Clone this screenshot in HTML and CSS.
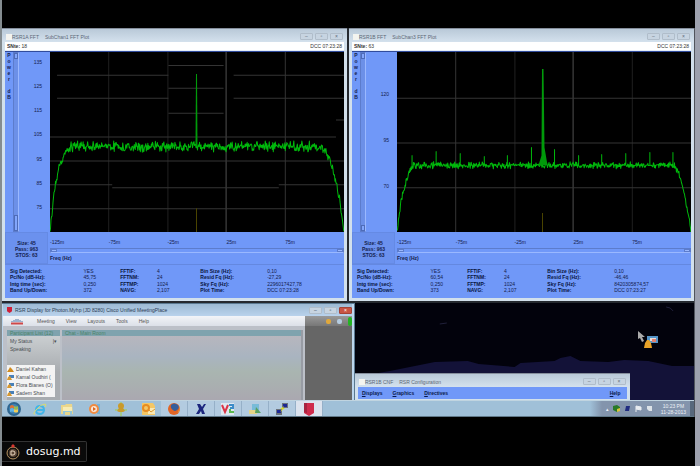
FILE: index.html
```
<!DOCTYPE html>
<html lang="en">
<head>
<meta charset="UTF-8">
<meta name="viewport" content="width=device-width, initial-scale=1.0">
<title>RSR Display</title>
<link rel="stylesheet" href="styles.css">
</head>
<body>

<main class="desktop">
    <section class="plots">
        <article class="window plot-window">
            <header class="titlebar">
                <span class="doc-icon"></span>
                <span class="title">RSR1A FFT</span>
                <span class="title">SubChan1 FFT Plot</span>
                <span class="controls"><button aria-label="Minimize">–</button><button aria-label="Maximize">▫</button><button aria-label="Close">×</button></span>
            </header>
            <div class="site"><span><b>SNte:</b> 18</span><span>DCC 07:23:28</span></div>
            <div class="plot">
                <div class="power">P<br>o<br>w<br>e<br>r<br><br>d<br>B</div>
                <div class="vslider"><i></i><i class="long"></i></div>
                <div class="ticks"><span>135</span><span>125</span><span>115</span><span>105</span><span>95</span><span>85</span><span>75</span></div>
                <svg class="canvas" id="plot-a" viewBox="0 0 293 181" preserveAspectRatio="none">
                    <path class="grid faint" d="M58.5 0V181M117.5 0V181"/>
                    <path class="grid bright" d="M175.5 0V181"/>
                    <path class="grid" d="M234.5 0V181M7 23.5H118M7 46.5H118M118 13.5H173M118 36.5H173M118 61.5H173M183 23.5H293M183 46.5H293M0 85.5H285M285 68.5H293M0 109.5H293M0 133.5H62M62 136.5H228M228 133.5H293M0 157.5H293"/>
                    <path class="marker" d="M146 157V181"/>
                </svg>
            </div>
            <div class="axis">
                <div class="passes">Size: 45<br>Pass: 963<br>STOS: 63</div>
                <div class="freq">
                    <div class="freq-labels"><span>-125m</span><span>-75m</span><span>-25m</span><span>25m</span><span>75m</span></div>
                    <div class="hslider"><i></i><i></i></div>
                    <b>Freq (Hz)</b>
                </div>
            </div>
            <table class="stats">
                <tr><th>Sig Detected:</th><td>YES</td><th>FFTIF:</th><td>4</td><th>Bin Size (Hz):</th><td>0,10</td></tr>
                <tr><th>Pc/No (dB-Hz):</th><td>45,75</td><th>FFTNM:</th><td>24</td><th>Resid Fq (Hz):</th><td>-27,29</td></tr>
                <tr><th>Intg time (sec):</th><td>0,250</td><th>FFTMP:</th><td>1024</td><th>Sky Fq (Hz):</th><td>2296017427,78</td></tr>
                <tr><th>Band Up/Down:</th><td>372</td><th>NAVG:</th><td>2,107</td><th>Plot Time:</th><td>DCC 07:23:28</td></tr>
            </table>
        </article>

        <article class="window plot-window">
            <header class="titlebar">
                <span class="doc-icon"></span>
                <span class="title">RSR1B FFT</span>
                <span class="title">SubChan3 FFT Plot</span>
                <span class="controls"><button aria-label="Minimize">–</button><button aria-label="Maximize">▫</button><button aria-label="Close">×</button></span>
            </header>
            <div class="site"><span><b>SNte:</b> 63</span><span>DCC 07:23:28</span></div>
            <div class="plot">
                <div class="power">P<br>o<br>w<br>e<br>r<br><br>d<br>B</div>
                <div class="vslider"><i></i><i></i></div>
                <div class="ticks wide"><span>120</span><span>95</span><span>70</span></div>
                <svg class="canvas" id="plot-b" viewBox="0 0 293 181" preserveAspectRatio="none">
                    <path class="grid faint" d="M117.5 0V181M234.5 0V181"/>
                    <path class="grid bright" d="M175.5 0V181"/>
                    <path class="grid" d="M58.5 0V181M0 46.5H293M0 91.5H293M0 136.5H293"/>
                    <path class="marker" d="M145 162V181"/>
                </svg>
            </div>
            <div class="axis">
                <div class="passes">Size: 45<br>Pass: 963<br>STOS: 63</div>
                <div class="freq">
                    <div class="freq-labels"><span>-125m</span><span>-75m</span><span>-25m</span><span>25m</span><span>75m</span></div>
                    <div class="hslider"><i></i><i></i></div>
                    <b>Freq (Hz)</b>
                </div>
            </div>
            <table class="stats">
                <tr><th>Sig Detected:</th><td>YES</td><th>FFTIF:</th><td>4</td><th>Bin Size (Hz):</th><td>0,10</td></tr>
                <tr><th>Pc/No (dB-Hz):</th><td>60,54</td><th>FFTNM:</th><td>24</td><th>Resid Fq (Hz):</th><td>-46,46</td></tr>
                <tr><th>Intg time (sec):</th><td>0,250</td><th>FFTMP:</th><td>1024</td><th>Sky Fq (Hz):</th><td>8420305874,57</td></tr>
                <tr><th>Band Up/Down:</th><td>373</td><th>NAVG:</th><td>2,107</td><th>Plot Time:</th><td>DCC 07:23:27</td></tr>
            </table>
        </article>
    </section>

    <section class="lower">
        <article class="meeting">
            <header class="meeting-title">
                <svg class="shield" viewBox="0 0 6 7"><path d="M0 0H6V5L3 7L0 5Z" fill="#cf2038"/></svg>
                <span>RSR Display for Photon.Myhp (JD 8280) Cisco Unified MeetingPlace</span>
                <span class="controls"><button aria-label="Minimize">–</button><button aria-label="Maximize">▫</button><button class="close" aria-label="Close">×</button></span>
            </header>
            <nav class="meeting-menu">
                <svg class="cisco" viewBox="0 0 12 7"><path d="M1 3V4M3 2V4M5 1V4M7 1V4M9 2V4M11 3V4" stroke="#5478a8"/><path d="M0 5.5H12" stroke="#d04848" stroke-width="2"/></svg>
                <a href="#">Meeting</a><a href="#">View</a><a href="#">Layouts</a><a href="#">Tools</a><a href="#">Help</a>
                <span class="status"><i class="amber"></i><i class="cloud"></i><i class="green"></i></span>
            </nav>
            <div class="meeting-body">
                <aside class="attendees">
                    <header>Participant List (12)</header>
                    <p>My Status <span>|▾</span></p>
                    <p>Speaking</p>
                    <ul>
                        <li><svg viewBox="0 0 7 5"><path d="M0 5L2 2L3 0L5 2L7 5Z" fill="#d08a1c"/></svg>Daniel Kahan</li>
                        <li><svg viewBox="0 0 7 5"><path d="M2 0H7V3H2Z" fill="#4880b8"/><path d="M0 5L1 2L3 1L5 5Z" fill="#d89830"/></svg>Kamal Oudhiri (</li>
                        <li><svg viewBox="0 0 7 5"><path d="M2 0H7V3H2Z" fill="#4880b8"/><path d="M0 5L1 2L3 1L5 5Z" fill="#d89830"/></svg>Flora Bianes (O)</li>
                        <li><svg viewBox="0 0 7 5"><path d="M2 0H7V3H2Z" fill="#4880b8"/><path d="M0 5L1 2L3 1L5 5Z" fill="#d89830"/></svg>Sadem Shan</li>
                    </ul>
                </aside>
                <div class="shared"><header>Chat - Main Room</header></div>
                <div class="void"></div>
            </div>
        </article>

        <div class="wallpaper">
            <svg class="hills" viewBox="0 0 340 97" preserveAspectRatio="none">
                <path d="M0 74L35 68L80 59L113 58L124 61L160 64L166 60L200 58L206 55L216 53L226 58L254 59L270 57L294 58L318 63L340 63V97H0Z" fill="#131238"/>
                <path d="M312 4L316 5L319 8M85 21L92 20" stroke="#20203a" fill="none"/>
            </svg>
            <svg class="pointer" viewBox="0 0 20 18">
                <path d="M0 0V8L2 7L4 11L6 10L4 6H7Z" fill="#aaa"/>
                <path d="M9 5H20V12H9Z" fill="#5594c8"/>
                <path d="M12 7H18V10H12Z" fill="#e8dcd8"/>
                <path d="M14 8H18V11H14Z" fill="#e08070"/>
                <path d="M6 17L7 12L9 9H11L13 12L14 17Z" fill="#e8a228"/>
            </svg>
            <article class="window config">
                <header class="titlebar">
                    <span class="doc-icon"></span>
                    <span class="title">RSR1B CNF</span>
                    <span class="title">RSR Configuration</span>
                    <span class="controls"><button aria-label="Minimize">–</button><button aria-label="Maximize">▫</button><button aria-label="Close">×</button></span>
                </header>
                <nav class="config-menu"><a href="#"><u>D</u>isplays</a><a href="#"><u>G</u>raphics</a><a href="#"><u>D</u>irectives</a><a href="#" class="help"><u>H</u>elp</a></nav>
            </article>
        </div>
    </section>

    <footer class="taskbar">
        <button aria-label="Start"><svg viewBox="0 0 16 14"><circle cx="8" cy="7" r="7" fill="#2f6690"/><circle cx="8" cy="7" r="5" fill="#3f83b4"/><path d="M4 4Q6 2 8 4V7Q6 5 4 7Z" fill="#d8743c"/><path d="M8 4Q10 5 12 4V7Q10 8 8 7Z" fill="#98bc54"/><path d="M4 7Q6 5 8 7V10Q6 9 4 10Z" fill="#62b4e4"/><path d="M8 7Q10 8 12 7V10Q10 11 8 10Z" fill="#f0cc58"/></svg></button>
        <button aria-label="Internet Explorer"><svg viewBox="0 0 16 14"><path d="M12 9Q11 12 8 12Q4 12 4 8Q4 4 8 4Q12 4 12 8H5" fill="none" stroke="#42b4e8" stroke-width="2"/><path d="M3 12Q0 13 4 8Q9 2 13 2Q15 2 13 5" fill="none" stroke="#d8dc70"/></svg></button>
        <button aria-label="Explorer"><svg viewBox="0 0 16 14"><path d="M2 3H6L7 2H13L14 12H2Z" fill="#ead68c"/><path d="M4 5H13V9H4Z" fill="#f8ecb4"/><path d="M4 9H13V12H4Z" fill="#94c6d8"/><path d="M6 10H11V13H6Z" fill="#e6d68c"/></svg></button>
        <button aria-label="Media Player"><svg viewBox="0 0 16 14"><path d="M11 2H14V12H11Z" fill="#76b4da"/><circle cx="8" cy="7" r="5" fill="#ef8b42"/><circle cx="8" cy="7" r="3" fill="#fbe6d6"/><path d="M7 5L10 7L7 9Z" fill="#d86424"/></svg></button>
        <button aria-label="Locator"><svg viewBox="0 0 16 14"><path d="M8 0V14M2 8H14" stroke="#a4cf42"/><circle cx="8" cy="4" r="3" fill="#c99a2b"/><path d="M4 9L6 6H10L12 9L10 10H6Z" fill="#c99a2b"/></svg></button>
        <button aria-label="Outlook"><svg viewBox="0 0 16 14"><path d="M2 1H13L15 4V13H2Z" fill="#f4c766"/><path d="M8 6H15V12H8Z" fill="#fae8b4"/><path d="M8 7L11 10L15 7" fill="none" stroke="#d89830"/><circle cx="6" cy="6" r="3" fill="none" stroke="#e78c22" stroke-width="2"/></svg></button>
        <button class="open" aria-label="Firefox"><svg viewBox="0 0 16 14"><circle cx="8" cy="7" r="6" fill="#e26526"/><path d="M5 3Q8 0 12 3Q14 6 11 8Q9 10 7 8Q4 6 5 3Z" fill="#365e9c"/><path d="M11 11Q14 8 13 4Q15 9 11 11Z" fill="#f0b84c"/></svg></button>
        <button class="open" aria-label="X server"><svg viewBox="0 0 16 14"><path d="M4 2H7L9 5L11 2H13L10 7L12 12H9L8 9L6 12H3L6 7Z" fill="#1c267d"/></svg></button>
        <button class="open" aria-label="VNC"><svg viewBox="0 0 16 14"><path d="M1 1H14V13H1Z" fill="#dfe7f0"/><path d="M2 3L5 10L8 3" fill="none" stroke="#db3446" stroke-width="2"/><path d="M9 3H13V6H10" fill="none" stroke="#3b8cc8" stroke-width="2"/><path d="M10 7V10H14" fill="none" stroke="#5bb950" stroke-width="2"/></svg></button>
        <button class="open" aria-label="Messenger"><svg viewBox="0 0 16 14"><path d="M5 2H12V9H5Z" fill="#78bbd8"/><path d="M2 8H10V12H2Z" fill="#e4d387"/><path d="M9 5L14 11H8Z" fill="#58a060"/></svg></button>
        <button class="open" aria-label="PuTTY"><svg viewBox="0 0 16 14"><path d="M8 1H14V6H8Z" fill="#6c737c"/><path d="M9 2H13V5H9Z" fill="#1c2794"/><path d="M2 7H8V13H2Z" fill="#6c737c"/><path d="M3 8H7V11H3Z" fill="#1c2794"/><path d="M10 4L6 7H8L6 10L11 6H9Z" fill="#d8d82c"/></svg></button>
        <button class="open active" aria-label="MeetingPlace"><svg viewBox="0 0 16 14"><path d="M3 1H13V11L8 14L3 11Z" fill="#cf2c4c"/><path d="M3 1H6V11L3 10Z" fill="#a72440"/></svg></button>
        <div class="tray">
            <span>▴</span>
            <svg viewBox="0 0 7 7"><path d="M0 1L4 0L7 2V5L4 7L0 5Z" fill="#287a28"/><path d="M4 4L7 3V6L4 7Z" fill="#d8c43c"/></svg>
            <svg viewBox="0 0 7 7"><path d="M2 1H6L5 6H1Z" fill="#202c80"/></svg>
            <svg viewBox="0 0 7 7"><path d="M1 1V7M1 1L6 2V5L1 4" fill="#e8ecf0" stroke="#e8ecf0"/></svg>
            <svg viewBox="0 0 7 7"><path d="M1 1H6V6H3L1 4Z" fill="#dde3e8"/></svg>
            <time>10:23 PM<br>11-28-2013</time>
            <i class="peek"></i>
        </div>
    </footer>
</main>

<a class="badge" href="#">
    <svg viewBox="0 0 14 16"><circle cx="7" cy="9" r="6" fill="#15120f" stroke="#b99562" stroke-width="1"/><circle cx="7" cy="9" r="4" fill="#5b4636"/><path d="M5 7H7Q9 7 9 9Q9 11 7 11H5Z" fill="none" stroke="#ead8c0" stroke-width="1"/><path d="M5 2L7 0L9 2L7 4Z" fill="#d8362e"/></svg>
    dosug.md
</a>

<script src="plots.js"></script>
</body>
</html>
```
FILE: styles.css
```
* {
    box-sizing: border-box;
}
body {
    margin: 0;
    min-height: 100vh;
    padding-top: 28px;
    background: #000;
    border-left: 2px solid #848c90;
    border-right: 5px solid #9da1ae;
    font: 5px/6px "Liberation Sans", Arial, sans-serif;
    color: #14204c;
}
a {
    color: inherit;
    text-decoration: none;
}
button {
    font: inherit;
    color: inherit;
    padding: 0;
    border: 0;
    background: none;
}
.desktop {
    border-right: 1px solid #50545c;
}

/* windows */
.plots {
    display: grid;
    grid-template-columns: 1fr 1fr;
    gap: 2px;
    background: #25292f;
    padding-bottom: 2px;
}
.window {
    background: #d2e0ec;
    border-top: 1px solid #858e9c;
    padding: 0 3px 3px;
}
.titlebar {
    display: flex;
    align-items: center;
    gap: 6px;
    height: 13px;
    margin: 0 -3px;
    padding: 2px 4px 0;
    background: linear-gradient(#b9c9d8, #d4e1ed);
    color: #5c6876;
}
.doc-icon {
    width: 6px;
    height: 6px;
    margin-right: -6px;
    background: #f4f4f0;
}
.controls {
    display: flex;
    gap: 2px;
    margin-left: auto;
}
.controls button {
    width: 13px;
    height: 7px;
    border: 1px solid #b0bdca;
    border-radius: 1px;
    background: #c7d4e1;
    line-height: 5px;
}
.site {
    display: flex;
    justify-content: space-between;
    height: 9px;
    padding: 1px 2px;
    background: #fff;
    color: #333;
    border-bottom: 1px solid #e4ecf8;
}

/* spectrum plots */
.plot {
    display: flex;
    height: 181px;
    background: #7098f8;
    border-top: 1px solid #304c9c;
}
.power {
    width: 8px;
    text-align: center;
    font-weight: bold;
}
.vslider {
    display: flex;
    flex-direction: column;
    justify-content: space-between;
    width: 6px;
    border: 1px solid #5c7ccc;
    border-right-color: #9ab8ff;
    background: #6c90e8;
}
.vslider i {
    height: 6px;
    border: 1px solid #4e6cb8;
    background: #82a6fc;
}
.vslider .long {
    height: 16px;
}
.ticks {
    display: flex;
    flex-direction: column;
    justify-content: space-between;
    width: 31px;
    padding: 7px 8px 22px 0;
    text-align: right;
}
.ticks.wide {
    padding: 39px 8px 43px 0;
}
.canvas {
    flex: 1;
    min-width: 0;
    height: 180px;
    background: #000;
}
.grid {
    fill: none;
    stroke: #343434;
}
.faint {
    stroke: #202020;
}
.bright {
    stroke: #505050;
}
.marker {
    stroke: #4a4400;
    stroke-width: 1px;
}
.trace {
    fill: none;
    stroke: #00b80c;
    stroke-width: 1px;
    stroke-linejoin: round;
}
.peak {
    fill: #009a0a;
}
.axis {
    display: flex;
    background: #7098f8;
}
.passes {
    width: 43px;
    height: 32px;
    padding-top: 7px;
    border: 1px solid #658ae4;
    background: #6b91ee;
    text-align: center;
    font-weight: bold;
}
.freq {
    flex: 1;
    padding: 7px 0 0 2px;
}
.freq-labels {
    display: grid;
    grid-template-columns: repeat(5, 1fr);
}
.hslider {
    display: flex;
    justify-content: space-between;
    height: 5px;
    margin: 3px 0 2px;
    border: 1px solid #5c7ccc;
    border-bottom-color: #9ab8ff;
}
.hslider i {
    width: 6px;
    background: #9ab8ff;
    border: 1px solid #5c7ccc;
}
.stats {
    width: 100%;
    height: 34px;
    table-layout: fixed;
    border-collapse: separate;
    border-spacing: 0;
    padding: 3px 0 5px 5px;
    background: #7098f8;
    border-top: 1px solid #6488e0;
}
.stats th,
.stats td {
    padding: 0;
    text-align: left;
    white-space: nowrap;
}
.stats th {
    color: #081440;
}
.stats tr > :nth-child(1) { width: 22%; }
.stats tr > :nth-child(2) { width: 11%; }
.stats tr > :nth-child(3) { width: 11%; }
.stats tr > :nth-child(4) { width: 13%; }
.stats tr > :nth-child(5) { width: 20%; }

/* meeting window and wallpaper */
.lower {
    display: flex;
    height: 97px;
}
.meeting {
    display: flex;
    flex-direction: column;
    width: 51%;
    border: 1px solid #5a7890;
    border-width: 1px 1px 0 0;
    background: #bcd6ee;
    padding: 0 2px 0 1px;
}
.meeting-title {
    display: flex;
    align-items: center;
    gap: 3px;
    height: 12px;
    padding-left: 4px;
    background: linear-gradient(#9dbad4, #b9d2ec);
    color: #2d4054;
}
.shield {
    width: 5px;
    height: 6px;
}
.meeting-title .close {
    background: #c85444;
    border-color: #a44438;
    color: #fff;
}
.meeting-menu {
    display: flex;
    align-items: center;
    gap: 11px;
    height: 10px;
    padding-left: 8px;
    background: linear-gradient(#f2f4f8, #dce0e8);
    color: #555;
}
.cisco {
    width: 12px;
    height: 7px;
    margin-right: 3px;
}
.status {
    display: flex;
    align-items: center;
    justify-content: flex-end;
    gap: 6px;
    width: 47px;
    height: 10px;
    margin-left: auto;
    background: linear-gradient(#999, #777);
}
.status i {
    width: 5px;
    height: 5px;
    border-radius: 2px;
}
.amber { background: #e0a83c; }
.cloud { background: #b4cce0; }
.status .green {
    width: 4px;
    height: 9px;
    background: #24b424;
}
.meeting-body {
    display: flex;
    flex: 1;
    gap: 2px;
    padding-left: 4px;
    background: #bcc0c8;
}
.attendees {
    width: 53px;
    margin-top: 4px;
    background: linear-gradient(#d0d4d6, #a8acb0 60%);
    color: #484c50;
}
.attendees header,
.shared header {
    height: 6px;
    padding-left: 3px;
    background: #7fa3ae;
    color: #4a8468;
    white-space: nowrap;
}
.attendees p {
    display: flex;
    justify-content: space-between;
    margin: 2px 3px;
}
.attendees ul {
    width: 48px;
    margin: 13px 0 0;
    padding: 0;
    background: #f3f3f3;
    list-style: none;
}
.attendees li {
    display: flex;
    align-items: center;
    gap: 2px;
    height: 8px;
    white-space: nowrap;
}
.attendees li svg {
    width: 7px;
    height: 5px;
    flex: none;
}
.shared {
    flex: 1;
    margin-top: 4px;
    border-right: 2px solid #989ca4;
    background: linear-gradient(#bbb7bd, #a9b4c0 38%, #a9b5b0 60%, #aaa8b0);
}
.void {
    width: 47px;
    background: #666;
}
.wallpaper {
    position: relative;
    display: flex;
    align-items: flex-end;
    flex: 1;
    background: #02020c;
}
.hills {
    position: absolute;
    inset: 0;
    width: 100%;
    height: 100%;
}
.pointer {
    position: absolute;
    top: 28px;
    right: 36px;
    width: 20px;
    height: 18px;
}
.config {
    position: relative;
    width: 81%;
    padding-bottom: 1px;
}
.config-menu {
    display: flex;
    gap: 10px;
    height: 12px;
    padding: 3px 6px 3px 4px;
    background: #7098f8;
    font-weight: bold;
    color: #0a1a4c;
}
.config-menu .help {
    margin-left: auto;
}

/* taskbar */
.taskbar {
    display: flex;
    height: 17px;
    border-top: 1px solid #c0d4e0;
    border-bottom: 1px solid #607888;
    background: #a0c0d8;
}
.taskbar button {
    display: grid;
    place-items: center;
    width: 27px;
}
.taskbar button:first-child {
    width: 24px;
}
.taskbar button svg {
    width: 16px;
    height: 14px;
}
.taskbar .open {
    border: 1px solid #96b0c8;
    border-width: 0 1px 0 0;
    background: #b3cbe0;
}
.taskbar .active {
    background: #dce3ee;
}
.tray {
    display: flex;
    align-items: center;
    gap: 4px;
    margin-left: auto;
    padding-left: 16px;
    background: linear-gradient(90deg, #a0c0d8, #8394ac 12px);
    color: #eef2f8;
}
.tray svg {
    width: 7px;
    height: 7px;
}
.tray time {
    margin-left: 4px;
    text-align: center;
}
.peek {
    width: 4px;
    height: 15px;
    background: #58687c;
}

.badge {
    display: flex;
    align-items: center;
    gap: 6px;
    width: 87px;
    height: 21px;
    margin: 24px 0 0 -2px;
    padding-left: 6px;
    border: 1px solid #333;
    border-left: 0;
    border-radius: 0 2px 2px 0;
    background: #0a0a0a;
    color: #fff;
    font: 11px/16px "DejaVu Sans", Verdana, sans-serif;
}
.badge svg {
    width: 14px;
    height: 16px;
}
```
FILE: plots.js
```
const NS = 'http://www.w3.org/2000/svg';

// small seeded generator so the noise is the same on every load
function makeRandom(seed) {
    return function () {
        seed = (seed * 16807) % 2147483647;
        return seed / 2147483647;
    };
}

// height of the trace between the fixed points of its envelope
function envelope(points, x) {
    for (let i = 1; i < points.length; i++) {
        const [x0, y0] = points[i - 1];
        const [x1, y1] = points[i];
        if (x <= x1) {
            return y0 + (y1 - y0) * (x - x0) / (x1 - x0);
        }
    }
    return points[points.length - 1][1];
}

function addPath(svg, cls, d) {
    const path = document.createElementNS(NS, 'path');
    path.setAttribute('class', cls);
    path.setAttribute('d', d);
    svg.appendChild(path);
}

function drawTrace(id, opts) {
    const svg = document.getElementById(id);
    const random = makeRandom(opts.seed);
    const points = [];

    for (let x = 0; x <= 293; x += 0.5) {
        const noise = (random() + random() - 1) * opts.noise;
        points.push(`${x} ${(envelope(opts.shape, x) + noise).toFixed(1)}`);
        const spike = opts.spikes.find(s => s[0] === x);
        if (spike) {
            points.push(`${x} ${spike[1]}`);
            points.push(`${x} ${envelope(opts.shape, x)}`);
        }
    }
    addPath(svg, 'trace', 'M' + points.join('L'));
    addPath(svg, 'peak', opts.peak);
}

drawTrace('plot-a', {
    seed: 4211,
    noise: 6,
    shape: [[0, 181], [4, 143], [8, 120], [14, 104], [20, 95], [270, 95], [278, 106], [284, 125], [288, 145], [293, 181]],
    spikes: [],
    peak: 'M145 95L145.5 22H146.5L147 95Z'
});

drawTrace('plot-b', {
    seed: 917,
    noise: 4,
    shape: [[0, 181], [4, 150], [9, 129], [16, 114], [277, 114], [283, 129], [288, 150], [293, 180]],
    spikes: [[15, 104], [39, 100], [63, 102], [87, 105], [110, 104], [134, 96], [157, 98], [181, 104], [204, 103], [228, 102], [252, 101], [275, 101]],
    peak: 'M141 114L144 104L144.5 17H146L147 96L150 114Z'
});
```
